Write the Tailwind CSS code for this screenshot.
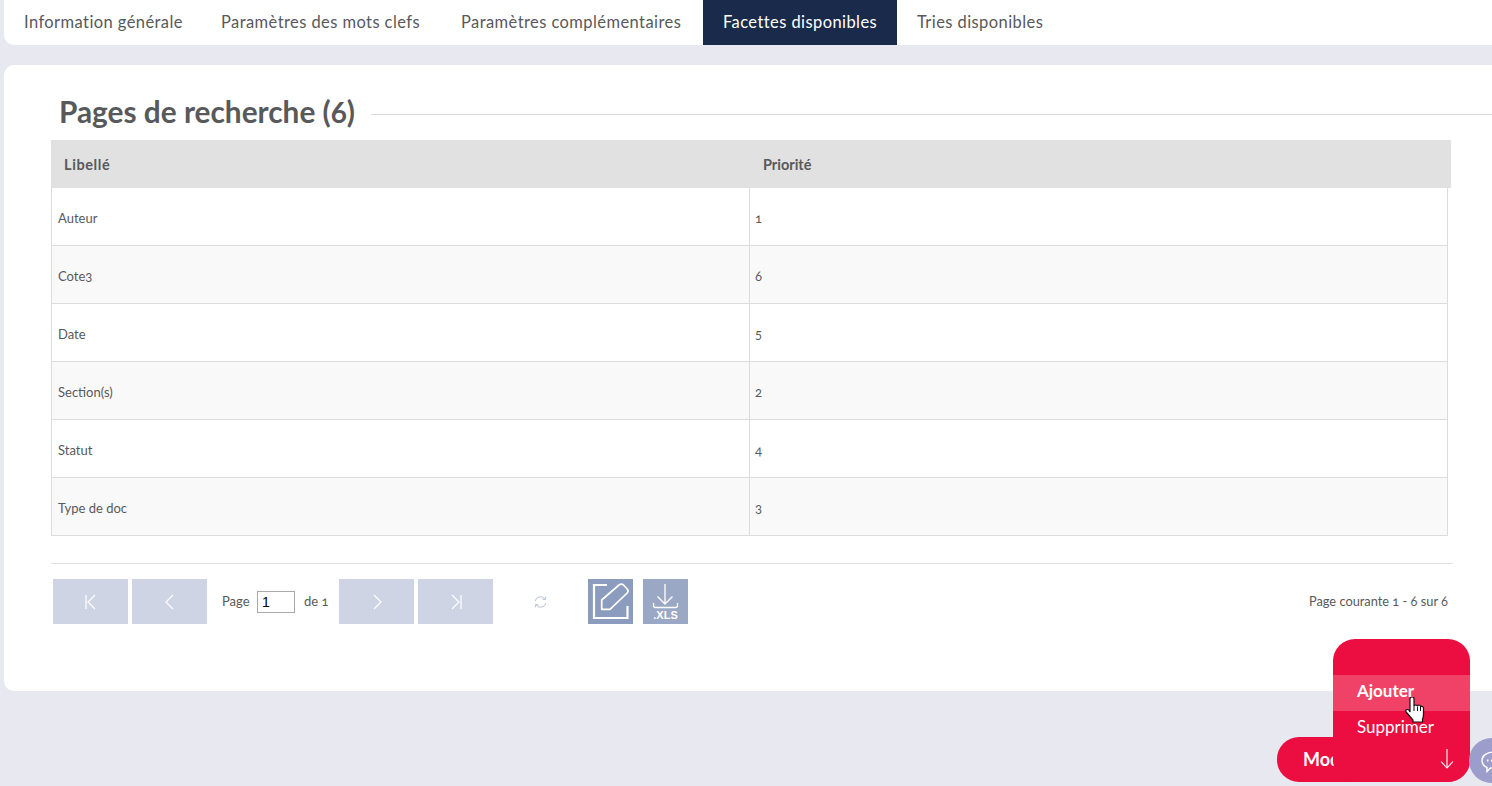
<!DOCTYPE html>
<html lang="fr">
<head>
    <meta charset="UTF-8">
    <meta name="viewport" content="width=device-width, initial-scale=1.0">
    <script src="https://cdn.jsdelivr.net/npm/@tailwindcss/browser@4"></script>
    <title>Facettes disponibles</title>
</head>
<body class="relative h-[786px] w-[1492px] overflow-hidden bg-[#e8e8f1] font-['Lato','Open_Sans',sans-serif] text-[#58595b] [font-variant-numeric:oldstyle-nums]">
    <!-- tabs -->
    <nav class="ml-1 flex h-[45px] items-center rounded-bl-[10px] bg-white text-[16.5px] tracking-[0.42px]">
        <a class="flex h-full w-[197px] items-center pl-5">Information générale</a>
        <a class="flex h-full w-[240px] items-center pl-[20px]">Paramètres des mots clefs</a>
        <a class="flex h-full w-[262px] items-center pl-[20px]">Paramètres complémentaires</a>
        <a class="flex h-full w-[194px] items-center bg-[#1a2a4a] pl-5 text-white">Facettes disponibles</a>
        <a class="flex h-full items-center pl-5">Tries disponibles</a>
    </nav>

    <!-- main card -->
    <main class="ml-1 mt-5 h-[626px] rounded-l-[10px] bg-white pl-[47px] pt-[30px]">
        <div class="flex h-[45px] items-start pl-2">
            <h1 class="text-[29.800px] font-bold leading-[34px] text-[#58595b]">Pages de recherche (6)</h1>
            <div class="ml-4 mt-[19px] h-px flex-1 bg-[#dcdcdc]"></div>
        </div>

        <div class="flex h-12 w-[1400px] items-center bg-[#e1e1e1] pt-[2px] text-[14.5px] font-bold">
            <div class="w-[699px] pl-[13px] tracking-[0.6px]">Libellé</div>
            <div class="pl-[13px]">Priorité</div>
        </div>

        <div class="w-[1397px] border-l border-[#dcdcdc] text-[13px]">
            <div class="grid h-[58px] grid-cols-[698px_1fr] border-b border-r border-[#dcdcdc] bg-white">
                <div class="flex items-center border-r border-[#dcdcdc] pt-[5px] pl-[6px]">Auteur</div>
                <div class="flex items-center pl-[5px] pt-[5px]">1</div>
            </div>
            <div class="grid h-[58px] grid-cols-[698px_1fr] border-b border-r border-[#dcdcdc] bg-[#f9f9f9]">
                <div class="flex items-center border-r border-[#dcdcdc] pt-[5px] pl-[6px]">Cote3</div>
                <div class="flex items-center pl-[5px] pt-[5px]">6</div>
            </div>
            <div class="grid h-[58px] grid-cols-[698px_1fr] border-b border-r border-[#dcdcdc] bg-white">
                <div class="flex items-center border-r border-[#dcdcdc] pt-[5px] pl-[6px]">Date</div>
                <div class="flex items-center pl-[5px] pt-[5px]">5</div>
            </div>
            <div class="grid h-[58px] grid-cols-[698px_1fr] border-b border-r border-[#dcdcdc] bg-[#f9f9f9]">
                <div class="flex items-center border-r border-[#dcdcdc] pt-[5px] pl-[6px]">Section(s)</div>
                <div class="flex items-center pl-[5px] pt-[5px]">2</div>
            </div>
            <div class="grid h-[58px] grid-cols-[698px_1fr] border-b border-r border-[#dcdcdc] bg-white">
                <div class="flex items-center border-r border-[#dcdcdc] pt-[5px] pl-[6px]">Statut</div>
                <div class="flex items-center pl-[5px] pt-[5px]">4</div>
            </div>
            <div class="grid h-[58px] grid-cols-[698px_1fr] border-b border-r border-[#dcdcdc] bg-[#f9f9f9]">
                <div class="flex items-center border-r border-[#dcdcdc] pt-[5px] pl-[6px]">Type de doc</div>
                <div class="flex items-center pl-[5px] pt-[5px]">3</div>
            </div>
        </div>

        <div class="mt-[27px] h-px w-[1402px] bg-[#e1e1e1]"></div>

        <!-- pager -->
        <div class="mt-[15px] flex h-[45px] w-[1397px] items-center pl-[2px] text-[13px]">
            <button class="flex h-[45px] w-[75px] items-center justify-center bg-[#ced4e3]">
                <svg width="14" height="16" viewBox="0 0 14 16" fill="none" stroke="#fff" stroke-width="1.2"><path d="M2 1v14M11 1 4 8l7 7"/></svg>
            </button>
            <button class="ml-1 flex h-[45px] w-[75px] items-center justify-center bg-[#ced4e3]">
                <svg width="10" height="16" viewBox="0 0 10 16" fill="none" stroke="#fff" stroke-width="1.2"><path d="M8 1 1 8l7 7"/></svg>
            </button>
            <span class="ml-[15px] w-[29px]">Page</span>
            <input class="ml-[6px] h-[22px] w-[38px] border border-[#a9a9a9] bg-white pl-1 font-['Liberation_Sans',sans-serif] text-[14px] text-black" value="1">
            <span class="ml-[9px] w-[24px] whitespace-nowrap">de 1</span>
            <button class="ml-[11px] flex h-[45px] w-[75px] items-center justify-center bg-[#ced4e3]">
                <svg width="10" height="16" viewBox="0 0 10 16" fill="none" stroke="#fff" stroke-width="1.2"><path d="m2 1 7 7-7 7"/></svg>
            </button>
            <button class="ml-1 flex h-[45px] w-[75px] items-center justify-center bg-[#ced4e3]">
                <svg width="14" height="16" viewBox="0 0 14 16" fill="none" stroke="#fff" stroke-width="1.2"><path d="m3 1 7 7-7 7M12 1v14"/></svg>
            </button>
            <svg class="ml-10" width="15" height="14" viewBox="0 0 15 14" fill="none" stroke="#b9c2d6" stroke-width="1"><path d="M2.2 6A5.4 5.4 0 0 1 12 4.2M12.8 8A5.4 5.4 0 0 1 3 9.8"/><path d="M12.8 1.6 12.3 4.6 9.4 4M2.2 12.4l.5-3 2.9.6"/></svg>
            <button class="ml-10 h-[45px] w-[45px] bg-[#8c9cbf]">
                <svg width="45" height="45" viewBox="0 0 45 45" fill="none" stroke="#fff"><path d="M19 6H6v33h33.500V27" stroke-width="2.200"/><path d="M13.700 21 31 6q2.500-1.800 4.500 0l3.700 4q1.800 2 0 4L22 30.300h-8.300z" stroke-width="1.700" stroke-linejoin="round"/></svg>
            </button>
            <button class="relative ml-[10px] h-[45px] w-[45px] bg-[#9ba8c5] text-white">
                <svg class="absolute left-0 top-0" width="45" height="30" viewBox="0 0 45 30" fill="none" stroke="#fff" stroke-width="1.300"><path d="M22 5v20M14.500 17.500l7.500 7.500 7.500-7.500M10.500 24v2.500q0 2 2 2h20q2 0 2-2V24"/></svg>
                <span class="absolute inset-x-0 top-[30px] text-center font-['Liberation_Sans',sans-serif] text-[11px] font-bold leading-[12px]">.XLS</span>
            </button>
            <span class="ml-auto text-[12.8px]">Page courante 1 - 6 sur 6</span>
        </div>
    </main>

    <!-- floating actions -->
    <button class="absolute left-[1277px] top-[737px] flex h-[45px] w-[193px] items-center rounded-[22px] bg-[#ec0e40] pl-[26px] text-[18px] font-bold text-white">Modifier</button>
    <div class="absolute left-[1333px] top-[639px] h-[143px] w-[137px] overflow-hidden rounded-[22px] bg-[#ec0e40] pt-[34px] text-[17px] text-white">
        <div class="mt-[2px] flex h-9 items-center bg-[#f04266] pb-1 pl-6 font-bold">Ajouter</div>
        <div class="flex h-9 items-center pb-1 pl-6">Supprimer</div>
        <svg class="absolute left-[107px] top-[110px]" width="14" height="20" viewBox="0 0 14 20" fill="none" stroke="#fff" stroke-width="1.1"><path d="M7 0v19M1 12.500l6 6.500 6-6.500"/></svg>
    </div>
    <div class="absolute left-[1469px] top-[738px] h-[45px] w-[45px] rounded-full bg-[#9d9dcb] pl-3 pt-[13px]">
        <svg width="26" height="22" viewBox="0 0 26 22" fill="none" stroke="#fff" stroke-width="1.400"><path d="M13 1a12 8 0 0 1 0 16H9.500L6 20.500V16.500A8.500 8 0 0 1 1 9a12 8 0 0 1 12-8z"/><path d="M6 9.500h1.500M10 9.500h1.500" stroke-width="1.800"/></svg>
    </div>

    <!-- mouse pointer -->
    <svg class="absolute left-[1405px] top-[697px]" width="20" height="26" viewBox="0 0 20 26" stroke="#111" stroke-width="1.2" fill="#fff"><path d="M5 2q0-2 2-2t2 2v7q0-1 1.500-1t2 1q0-1 1.500-1t1.500 1.500q1-.5 2 0t1 2V17q0 3-1 5v3H8v-2L2 16q-2-2-1-3t3 0l1 2z"/><path d="M9 9v5M12.500 9.500V14M15.500 10v4" stroke-width="1"/></svg>
</body>
</html>
